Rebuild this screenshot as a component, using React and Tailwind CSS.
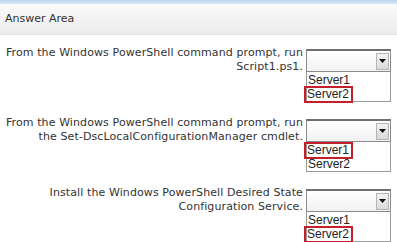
import React from 'react';

const rows = [
  {
    lines: ['From the Windows PowerShell command prompt, run', 'Script1.ps1.'],
    picked: 1,
  },
  {
    lines: [
      'From the Windows PowerShell command prompt, run',
      'the Set-DscLocalConfigurationManager cmdlet.',
    ],
    picked: 0,
  },
  {
    lines: ['Install the Windows PowerShell Desired State', 'Configuration Service.'],
    picked: 1,
  },
];

const options = ['Server1', 'Server2'];

const Dropdown = ({ picked }) => (
  <div className="w-[85px] mt-[3px]">
    <div className="h-[23px] border border-[#8a8a8a] border-t-2 border-t-[#6f6f6f] bg-gradient-to-b from-[#ffffff] to-[#f2f2f2] flex items-center justify-end pr-[1px]">
      <div className="w-[13px] h-[17px] bg-gradient-to-b from-[#f4f4f4] to-[#d9d9d9] border border-[#b5b5b5] flex items-center justify-center">
        <svg width="7" height="4" viewBox="0 0 7 4">
          <path d="M0 0 H7 L3.5 4 Z" fill="#111" />
        </svg>
      </div>
    </div>
    <div className="h-[30px] border border-[#9a9a9a] border-t-0 bg-white flex flex-col pt-[1px]">
      {options.map((o, i) => (
        <div key={o} className="h-[14px] flex items-center">
          <span
            className={`font-['Liberation_Sans',sans-serif] text-[12px] leading-[13px] text-[#222] px-[1px] ${
              picked === i ? 'border-2 border-[#c4202b] -ml-[3px] pl-[1px] pr-[2px]' : ''
            }`}
          >
            {o}
          </span>
        </div>
      ))}
    </div>
  </div>
);

export default function App() {
  return (
    <div className="w-[397px] h-[242px] bg-white overflow-hidden font-['DejaVu_Sans',sans-serif]">
      <div className="h-[4px] bg-gradient-to-b from-[#bcd6ee] to-[#d8e7f4]" />
      <div className="h-[31px] bg-gradient-to-b from-[#fbfbfb] to-[#ececec] border-b border-[#e2e2e2] flex items-center pl-[5px]">
        <span className="text-[11px] text-[#333]">Answer Area</span>
      </div>
      <div className="flex flex-col gap-[14px] pt-[11px]">
        {rows.map((r, i) => (
          <div key={i} className="flex items-start">
            <div className="w-[306px] pr-[3px] text-right text-[11px] leading-[14px] text-[#333] tracking-[0.1px]">
              {r.lines.map((l) => (
                <div key={l}>{l}</div>
              ))}
            </div>
            <Dropdown picked={r.picked} />
          </div>
        ))}
      </div>
    </div>
  );
}
